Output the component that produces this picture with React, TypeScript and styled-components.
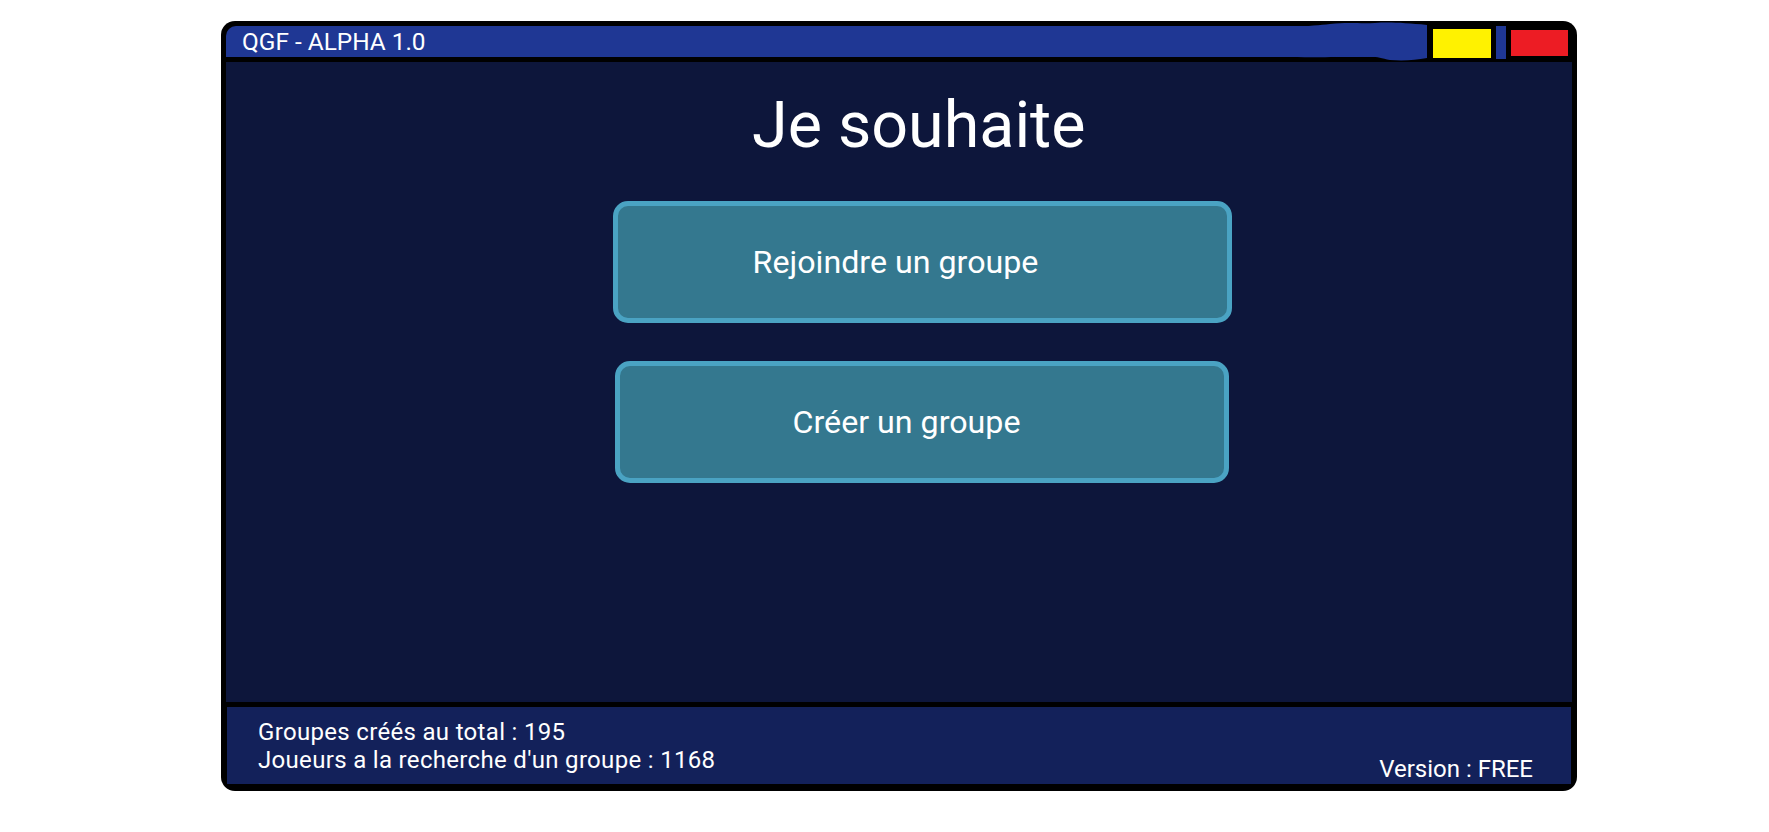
import React from "react";
import styled, { createGlobalStyle } from "styled-components";

const GlobalStyle = createGlobalStyle`
  html, body {
    margin: 0;
    padding: 0;
    background: #ffffff;
  }
  body {
    font-family: Roboto, "Liberation Sans", Arial, sans-serif;
  }
`;

const Page = styled.div`
  padding: 21px 0 0 221px;
`;

const Window = styled.div`
  width: 1356px;
  box-sizing: border-box;
  background: #000000;
  border-radius: 14px;
  padding: 5px 5px 7px 5px;
  display: flex;
  flex-direction: column;
  gap: 5px;
`;

const TitleBar = styled.div`
  display: flex;
  height: 31px;
  gap: 5px;
  padding-right: 4px;
`;

const TitleBlue = styled.div`
  position: relative;
  flex: 1;
  background: #1f3794;
  border-top-left-radius: 10px;
  padding-left: 16px;
  color: #ffffff;
  font-size: 24.4px;
  line-height: 32px;
  white-space: nowrap;
`;

const Scribble = styled.svg`
  position: absolute;
  right: 0;
  top: -5px;
  width: 137px;
  height: 40px;
`;

const ControlBlock = styled.div<{ $color: string; $w: number; $top: number; $h: number; $ml?: number }>`
  width: ${(p) => p.$w}px;
  height: ${(p) => p.$h}px;
  margin-top: ${(p) => p.$top}px;
  margin-left: ${(p) => p.$ml ?? 0}px;
  background: ${(p) => p.$color};
`;

const Main = styled.div`
  height: 640px;
  background: #0d163b;
  display: flex;
  flex-direction: column;
  align-items: flex-start;
  padding-top: 28px;
  box-sizing: border-box;
`;

const Heading = styled.h1`
  margin: 0 0 41px 526px;
  font-weight: 400;
  font-size: 64.6px;
  line-height: 70px;
  color: #ffffff;
  white-space: nowrap;
`;

const ChoiceButton = styled.button<{ $w: number; $h: number; $ml: number; $pr: number; $mt?: number }>`
  width: ${(p) => p.$w}px;
  height: ${(p) => p.$h}px;
  margin: ${(p) => p.$mt ?? 0}px 0 0 ${(p) => p.$ml}px;
  box-sizing: border-box;
  border: 5px solid #4aa3c3;
  border-radius: 15px;
  background: #34788f;
  display: flex;
  align-items: center;
  justify-content: center;
  padding: 0 ${(p) => p.$pr}px 0 0;
  color: #ffffff;
  font-family: Roboto, "Liberation Sans", Arial, sans-serif;
  font-size: 32.2px;
  white-space: nowrap;
  cursor: pointer;
`;

const Footer = styled.div`
  height: 77px;
  margin: 0 1px;
  box-sizing: border-box;
  background: #13215a;
  display: flex;
  justify-content: space-between;
  padding: 11px 38px 0 31px;
  color: #ffffff;
  font-size: 24px;
  line-height: 28px;
  white-space: nowrap;
`;

const Stats = styled.div`
  display: flex;
  flex-direction: column;
  letter-spacing: 0.32px;
`;

const Version = styled.div`
  align-self: flex-end;
  padding-bottom: 1px;
`;

export default function App() {
  return (
    <>
      <GlobalStyle />
      <Page>
        <Window>
          <TitleBar>
            <TitleBlue>
              QGF - ALPHA 1.0
              <Scribble viewBox="0 0 137 40">
                <path
                  d="M0,6 C20,5 30,4 40,3 C60,1 70,3 85,2 C100,1 115,2 137,4 L137,37 C125,39 115,40 100,39 C90,37 85,35 78,36 C70,36 60,33 50,35 C40,37 20,36 0,36 Z"
                  fill="#1f3794"
                />
              </Scribble>
            </TitleBlue>
            <ControlBlock $color="#fff200" $w={58} $top={3} $h={29} $ml={1} />
            <ControlBlock $color="#1f3794" $w={10} $top={0} $h={33} />
            <ControlBlock $color="#ed1c24" $w={57} $top={4} $h={26} />
          </TitleBar>
          <Main>
            <Heading>Je souhaite</Heading>
            <ChoiceButton $w={619} $h={122} $ml={387} $pr={54}>
              Rejoindre un groupe
            </ChoiceButton>
            <ChoiceButton $w={614} $h={122} $ml={389} $pr={31} $mt={38}>
              Créer un groupe
            </ChoiceButton>
          </Main>
          <Footer>
            <Stats>
              <span>Groupes créés au total : 195</span>
              <span>Joueurs a la recherche d'un groupe : 1168</span>
            </Stats>
            <Version>Version : FREE</Version>
          </Footer>
        </Window>
      </Page>
    </>
  );
}
